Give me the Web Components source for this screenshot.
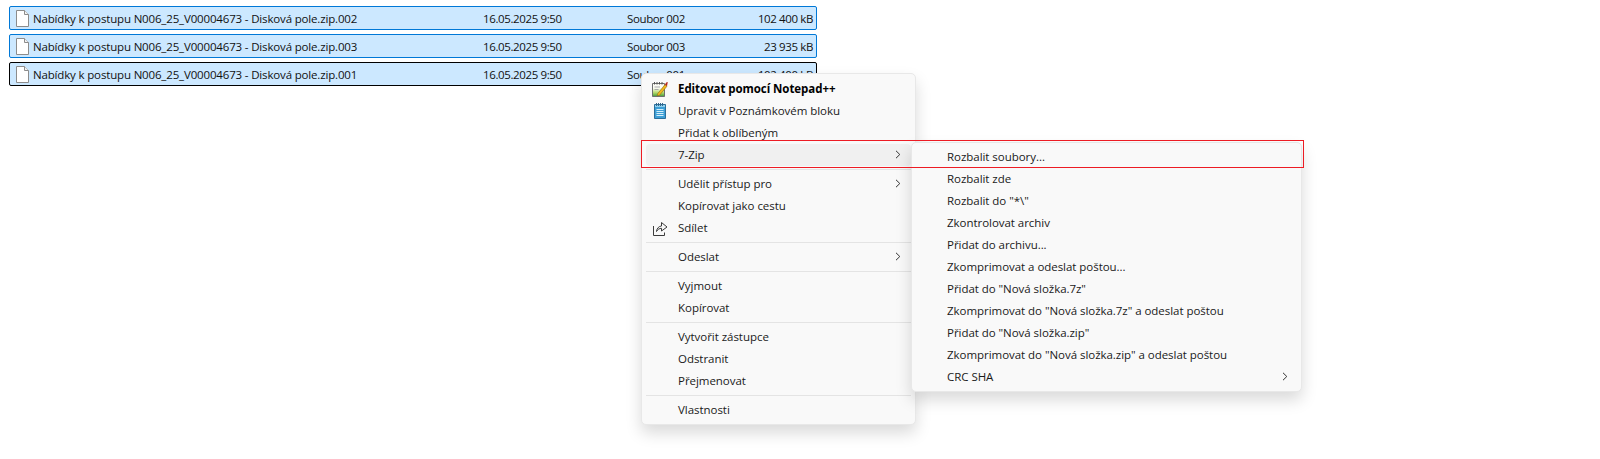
<!DOCTYPE html>
<html lang="cs">
<head>
<meta charset="utf-8">
<title>7-Zip</title>
<style>
	html, body { margin: 0; height: 100%; background: #fff; overflow: hidden; }
	body { position: relative; font-family: "Open Sans", "Noto Sans", sans-serif; font-size: 11.5px; color: #1a1a1a; }
</style>
</head>
<body>

<template id="file-list-tpl">
	<style>
		:host { display: flex; flex-direction: column; gap: 4px; width: 808px; padding: 6px 0 0 9px; }
	</style>
	<slot></slot>
</template>

<template id="file-row-tpl">
	<style>
		:host {
			display: grid;
			grid-template-columns: 450px 144px 1fr auto;
			align-items: center;
			box-sizing: border-box;
			height: 24px;
			padding: 0 3px 0 23px;
			position: relative;
			background: #cce8ff;
			border: 1px solid #0078d7;
			border-radius: 2px;
			color: #111;
			letter-spacing: -.16px;
			white-space: nowrap;
		}
		:host([focused]) { border-color: #000; }
		svg { position: absolute; left: 6px; top: 3px; }
		.meta { letter-spacing: -.38px; }
	</style>
	<svg width="13" height="17" viewBox="0 0 13 17" aria-hidden="true">
		<path d="M.5.5H8.5L12.5 4.5V16.5H.5Z" fill="#fff" stroke="#8c8c8c"/>
		<path d="M8.5.5V4.5H12.5" fill="#f2f2f2" stroke="#8c8c8c"/>
	</svg>
	<slot></slot>
	<span class="meta"><slot name="date"></slot></span>
	<span class="meta"><slot name="type"></slot></span>
	<span class="meta"><slot name="size"></slot></span>
</template>

<template id="context-menu-tpl">
	<style>
		:host {
			display: flex;
			flex-direction: column;
			box-sizing: border-box;
			position: absolute;
			padding: 3px;
			background: #f9f9f9;
			border: 1px solid #e8e8e8;
			border-radius: 5px;
			box-shadow: 0 8px 16px rgba(0,0,0,.15);
		}
	</style>
	<slot></slot>
</template>

<template id="menu-item-tpl">
	<style>
		:host {
			display: flex;
			align-items: center;
			box-sizing: border-box;
			height: 22px;
			padding: 0 10px 1px 32px;
			position: relative;
			border-radius: 4px;
			color: #1a1a1a;
			letter-spacing: -.04px;
			white-space: nowrap;
			flex: none;
		}
		:host([active]) { background: #f0f0f0; }
		:host([bold]) { font-weight: 700; color: #000; letter-spacing: -.06px; }
		.label { flex: 1; }
		.icon { position: absolute; left: 6px; top: 3px; width: 16px; height: 16px; }
		svg.chev { display: none; }
		:host([submenu]) svg.chev { display: block; }
	</style>
	<span class="icon"><slot name="icon"></slot></span>
	<span class="label"><slot></slot></span>
	<svg class="chev" width="6" height="9" viewBox="0 0 6 9" aria-hidden="true"><path d="M1 .8 4.8 4.5 1 8.2" fill="none" stroke="#333" stroke-width="1"/></svg>
</template>

<template id="menu-separator-tpl">
	<style>
		:host { display: flex; align-items: center; height: 7px; flex: none; }
		i { display: block; width: 100%; height: 1px; background: #e4e4e4; }
	</style>
	<i></i>
</template>

<template id="red-outline-tpl">
	<style>
		:host { display: block; position: absolute; box-sizing: border-box; border: 1px solid #ed1c24; pointer-events: none; }
	</style>
</template>

<file-list>
	<file-row>Nabídky k postupu N006_25_V00004673 - Disková pole.zip.002<span slot="date">16.05.2025 9:50</span><span slot="type">Soubor 002</span><span slot="size">102 400 kB</span></file-row>
	<file-row>Nabídky k postupu N006_25_V00004673 - Disková pole.zip.003<span slot="date">16.05.2025 9:50</span><span slot="type">Soubor 003</span><span slot="size">23 935 kB</span></file-row>
	<file-row focused>Nabídky k postupu N006_25_V00004673 - Disková pole.zip.001<span slot="date">16.05.2025 9:50</span><span slot="type">Soubor 001</span><span slot="size">102 400 kB</span></file-row>
</file-list>

<context-menu style="left:641px;top:73px;width:275px;padding:4px 4px 3px">
	<menu-item bold>
		<svg slot="icon" width="16" height="16" viewBox="0 0 16 16" aria-hidden="true">
			<defs><linearGradient id="np" x1="0" y1="0" x2="0" y2="1"><stop offset=".35" stop-color="#fdfdf6"/><stop offset=".7" stop-color="#b5d96c"/><stop offset="1" stop-color="#3f9a3a"/></linearGradient></defs>
			<path d="M.5 2.5H12.5V15.5H.5Z" fill="url(#np)" stroke="#6f6f6f"/>
			<path d="M2.5 1V3.5M5 1V3.5M7.5 1V3.5M10 1V3.5" stroke="#555"/>
			<path d="M2.5 6H8M2.5 8.5H6.5" stroke="#a9a9a9"/>
			<path d="M5.6 12.8 13 3.6 15 5.2 7.6 14.2 5.2 14.8Z" fill="#f2b81e" stroke="#8c6a12" stroke-width=".6"/>
			<path d="M13 3.6 14.2 1.4 15.8 1 15.4 3 15 5.2Z" fill="#b8281e"/>
		</svg>
		Editovat pomocí Notepad++
	</menu-item>
	<menu-item>
		<svg slot="icon" width="16" height="16" viewBox="0 0 16 16" aria-hidden="true">
			<path d="M2.5 1.5H13.5V15.5H2.5Z" fill="#3d9fd6" stroke="#2b6f9c"/>
			<path d="M3 2H13V4H3Z" fill="#8fd0ee"/>
			<path d="M4.5 0V3M6.5 0V3M8.5 0V3M10.5 0V3" stroke="#33658a"/>
			<path d="M4.5 6.5H11.5M4.5 8.5H11.5M4.5 10.5H11.5M4.5 12.5H11.5" stroke="#d4eefa"/>
		</svg>
		Upravit v Poznámkovém bloku
	</menu-item>
	<menu-item>Přidat k oblíbeným</menu-item>
	<menu-item active submenu>7-Zip</menu-item>
	<menu-separator></menu-separator>
	<menu-item submenu>Udělit přístup pro</menu-item>
	<menu-item>Kopírovat jako cestu</menu-item>
	<menu-item>
		<svg slot="icon" width="16" height="16" viewBox="0 0 16 16" aria-hidden="true">
			<path d="M1.5 6V15.5H12.5V12.5" fill="none" stroke="#3c3c3c"/>
			<path d="M4.5 11.5C4.7 8.5 7 6 9.5 6V2.5L15 7 9.5 11V8.3C7.6 8.3 5.6 9.4 4.5 11.5Z" fill="none" stroke="#3c3c3c"/>
		</svg>
		Sdílet
	</menu-item>
	<menu-separator></menu-separator>
	<menu-item submenu>Odeslat</menu-item>
	<menu-separator></menu-separator>
	<menu-item>Vyjmout</menu-item>
	<menu-item>Kopírovat</menu-item>
	<menu-separator></menu-separator>
	<menu-item>Vytvořit zástupce</menu-item>
	<menu-item>Odstranit</menu-item>
	<menu-item>Přejmenovat</menu-item>
	<menu-separator></menu-separator>
	<menu-item>Vlastnosti</menu-item>
</context-menu>

<context-menu style="left:911px;top:142px;width:391px">
	<menu-item>Rozbalit soubory...</menu-item>
	<menu-item>Rozbalit zde</menu-item>
	<menu-item>Rozbalit do "*\"</menu-item>
	<menu-item>Zkontrolovat archiv</menu-item>
	<menu-item>Přidat do archivu...</menu-item>
	<menu-item>Zkomprimovat a odeslat poštou...</menu-item>
	<menu-item>Přidat do "Nová složka.7z"</menu-item>
	<menu-item>Zkomprimovat do "Nová složka.7z" a odeslat poštou</menu-item>
	<menu-item>Přidat do "Nová složka.zip"</menu-item>
	<menu-item>Zkomprimovat do "Nová složka.zip" a odeslat poštou</menu-item>
	<menu-item submenu>CRC SHA</menu-item>
</context-menu>

<red-outline style="left:641px;top:140px;width:663px;height:28px"></red-outline>

<script>
function defineFromTemplate( tag, templateId ) {
	window.customElements.define( tag, class extends HTMLElement {
		constructor() {
			super();
			const root = this.attachShadow( { mode: 'open' } );
			root.appendChild( document.getElementById( templateId ).content.cloneNode( true ) );
		}
	} );
}

defineFromTemplate( 'file-list', 'file-list-tpl' );
defineFromTemplate( 'file-row', 'file-row-tpl' );
defineFromTemplate( 'context-menu', 'context-menu-tpl' );
defineFromTemplate( 'menu-item', 'menu-item-tpl' );
defineFromTemplate( 'menu-separator', 'menu-separator-tpl' );
defineFromTemplate( 'red-outline', 'red-outline-tpl' );
</script>
</body>
</html>
